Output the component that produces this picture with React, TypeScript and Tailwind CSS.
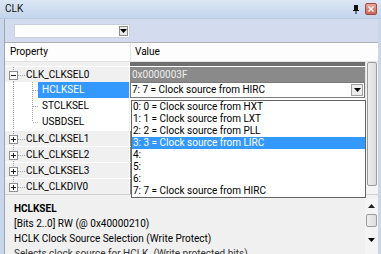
import React from "react";

const dotted = "#a0a0a0";

function TopGutter({ expanded, last }: { expanded?: boolean; last?: boolean }) {
  return (
    <svg width="21" height="16" className="shrink-0">
      <line x1="8.5" y1="0" x2="8.5" y2={last ? 8 : 16} stroke={dotted} strokeDasharray="1 1" />
      <line x1="13" y1="8.5" x2="20" y2="8.5" stroke={dotted} strokeDasharray="1 1" />
      <rect x="4.5" y="4.5" width="8" height="8" fill="#fff" stroke="#8e8f8f" />
      <line x1="6" y1="8.5" x2="11" y2="8.5" stroke="#222" />
      {!expanded && <line x1="8.5" y1="6" x2="8.5" y2="11" stroke="#222" />}
    </svg>
  );
}

function SubGutter({ last }: { last?: boolean }) {
  return (
    <svg width="33" height="16" className="shrink-0">
      <line x1="8.5" y1="0" x2="8.5" y2="16" stroke={dotted} strokeDasharray="1 1" />
      <line x1="27.5" y1="0" x2="27.5" y2={last ? 8 : 16} stroke={dotted} strokeDasharray="1 1" />
      <line x1="28" y1="8.5" x2="33" y2="8.5" stroke={dotted} strokeDasharray="1 1" />
    </svg>
  );
}

function Arrow() {
  return (
    <svg width="7" height="4" viewBox="0 0 7 4">
      <path d="M0 0h7L3.5 4z" fill="#000" />
    </svg>
  );
}

const groups = ["CLK_CLKSEL1", "CLK_CLKSEL2", "CLK_CLKSEL3", "CLK_CLKDIV0"];
const subs = ["HCLKSEL", "STCLKSEL", "USBDSEL"];

const options = [
  "0: 0 = Clock source from HXT",
  "1: 1 = Clock source from LXT",
  "2: 2 = Clock source from PLL",
  "3: 3 = Clock source from LIRC",
  "4:",
  "5:",
  "6:",
  "7: 7 = Clock source from HIRC",
];

export default function App() {
  return (
    <div className="relative w-[381px] h-[254px] overflow-hidden flex flex-col bg-[#c9d7ea] text-[10px] leading-none text-black font-['Roboto',sans-serif]">
      {/* title bar */}
      <div className="h-[19px] shrink-0 flex items-center pl-[5px] pr-[4px] bg-gradient-to-b from-[#dce7f5] to-[#c3d4ec] border-b border-[#b9c9e0]">
        <span className="text-[#111]">CLK</span>
        <div className="ml-auto flex items-center gap-[6px]">
          <svg width="6" height="9" viewBox="0 0 6 9">
            <path d="M1 0h4v5h1v1H3.5v3h-1V6H0V5h1z" fill="#111" />
          </svg>
          <div className="w-[12px] h-[12px] rounded-[2px] border border-[#a4473c] bg-gradient-to-b from-[#e7a69d] to-[#c9675a] flex items-center justify-center">
            <svg width="6" height="6" viewBox="0 0 6 6">
              <path d="M0.5 0.5l5 5M5.5 0.5l-5 5" stroke="#fff" strokeWidth="1.4" />
            </svg>
          </div>
        </div>
      </div>

      {/* body */}
      <div className="flex-1 flex pl-[4px] pr-[3px] min-h-0">
        <div className="flex-1 flex flex-col border-l border-[#9ca5b4] bg-white min-h-0">
          {/* toolbar */}
          <div className="h-[24px] shrink-0 flex items-center pl-[9px] bg-[#d3dbef] border-b border-[#b1b1b1]">
            <div className="w-[116px] h-[14px] bg-white border border-[#c9cfdb] flex justify-end items-center pr-[1px]">
              <div className="w-[9px] h-[10px] bg-[#eaeaea] border border-[#8c8c8c] flex items-center justify-center">
                <Arrow />
              </div>
            </div>
          </div>

          {/* header */}
          <div className="h-[19px] shrink-0 flex items-center bg-[#fdfdfd] border-b border-[#e2e2e2]">
            <div className="w-[126px] pl-[5px] border-r border-[#e6e6e6] h-full flex items-center">Property</div>
            <div className="pl-[4px]">Value</div>
          </div>

          {/* grid */}
          <div className="flex-1 flex min-h-0">
            <div className="flex-1 flex flex-col">
              <div className="h-[4px] flex">
                <div className="w-[125px] bg-[#f0f0f0] border-r border-white" />
                <div className="flex-1 bg-[#6f6f6f]" />
              </div>

              <div className="h-[16px] flex border-t border-white">
                <div className="w-[125px] flex items-center bg-[#f0f0f0] border-r border-white">
                  <TopGutter expanded />
                  <span>CLK_CLKSEL0</span>
                </div>
                <div className="flex-1 bg-[#8a8a8a] text-[#eeeeee] flex items-center pl-[2px]">0x0000003F</div>
              </div>

              {subs.map((s, i) => (
                <div key={s} className="h-[16px] flex">
                  <div className="w-[125px] flex items-center bg-white border-r border-[#f0f0f0]">
                    <SubGutter last={i === subs.length - 1} />
                    <span className={"flex-1 h-full flex items-center pl-[4px] " + (i === 0 ? "bg-[#3399ff] text-white" : "")}>{s}</span>
                  </div>
                  {i === 0 ? (
                    <div className="flex-1 flex items-center bg-white border border-[#7a7a7a] pl-[1px] pr-[1px]">
                      <span>7: 7 = Clock source from HIRC</span>
                      <div className="ml-auto w-[12px] h-[12px] bg-[#ececec] border border-[#a0a0a0] flex items-center justify-center">
                        <Arrow />
                      </div>
                    </div>
                  ) : (
                    <div className="flex-1 bg-white" />
                  )}
                </div>
              ))}

              {groups.map((g, i) => (
                <div key={g} className="h-[16px] flex border-t border-white">
                  <div className="w-[125px] flex items-center bg-[#f0f0f0] border-r border-white">
                    <TopGutter last={i === groups.length - 1} />
                    <span>{g}</span>
                  </div>
                  <div className="flex-1 bg-[#8a8a8a]" />
                </div>
              ))}
            </div>

            {/* grid scrollbar */}
            <div className="w-[13px] flex flex-col bg-[#f4f4f4] border-l border-[#e4e4e4]">
              <div className="h-[124px] m-[0_1px] bg-gradient-to-r from-[#ededed] to-[#dcdcdc] border border-[#9b9b9b] rounded-[2px]" />
            </div>
          </div>

          {/* splitter */}
          <div className="h-[4px] shrink-0 bg-[#f0f0f0] border-t border-[#cfcfcf]" />

          {/* description */}
          <div className="h-[56px] shrink-0 flex bg-[#f0f0f0]">
            <div className="flex-1 pl-[9px] pt-[6px] flex flex-col gap-[5px] overflow-hidden">
              <div className="h-[10px] shrink-0 font-bold">HCLKSEL</div>
              <div className="h-[10px] shrink-0">[Bits 2..0] RW (@ 0x40000210)</div>
              <div className="h-[10px] shrink-0">HCLK Clock Source Selection (Write Protect)</div>
              <div className="h-[10px] shrink-0 text-[#333]">Selects clock source for HCLK. (Write protected bits)</div>
            </div>
            <div className="w-[13px] flex flex-col items-center bg-[#f4f4f4]">
              <div className="h-[16px] flex items-center justify-center">
                <svg width="7" height="4" viewBox="0 0 7 4"><path d="M0 4h7L3.5 0z" fill="#222" /></svg>
              </div>
              <div className="w-[11px] h-[13px] bg-gradient-to-r from-[#eeeeee] to-[#dddddd] border border-[#9b9b9b] rounded-[2px]" />
              <div className="flex-1" />
              <div className="h-[16px] flex items-center justify-center mb-[6px]">
                <Arrow />
              </div>
            </div>
          </div>
        </div>
      </div>

      {/* dropdown list */}
      <div className="absolute left-[131px] top-[100px] w-[235px] flex flex-col bg-white border border-[#646464]">
        {options.map((o, i) => (
          <div key={o} className={"h-[12px] flex items-center pl-[1px] " + (i === 3 ? "bg-[#3399ff] text-white" : "")}>
            {o}
          </div>
        ))}
      </div>
    </div>
  );
}
